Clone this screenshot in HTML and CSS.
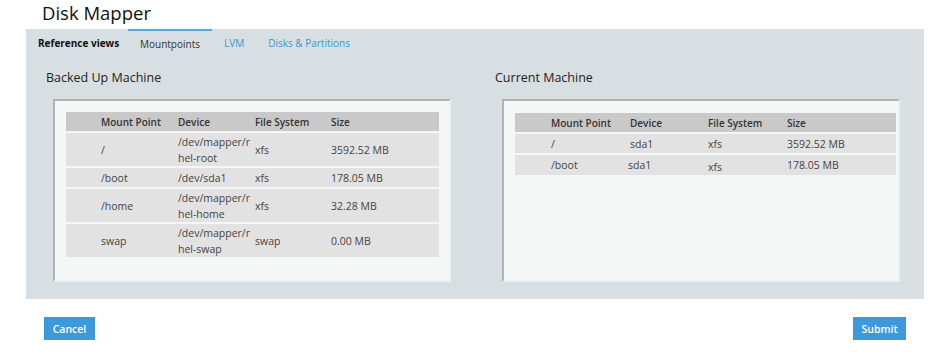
FILE: index.html
```html
<!DOCTYPE html>
<html lang="en">
<head>
    <meta charset="UTF-8">
    <title>Disk Mapper</title>
    <link rel="stylesheet" href="styles.css">
</head>
<body>
    <h1 class="page-title">Disk Mapper</h1>
    <div class="panel">
        <div class="tabs">
            <span class="tabs-label">Reference views</span>
            <a class="tab active">Mountpoints</a>
            <a class="tab">LVM</a>
            <a class="tab">Disks &amp; Partitions</a>
        </div>
        <div class="machines">
            <div class="machine">
                <h2 class="machine-title">Backed Up Machine</h2>
                <div class="machine-box">
                    <table class="mounts mounts-left">
                        <colgroup><col class="c1"><col class="c2"><col class="c3"><col class="c4"></colgroup>
                        <thead>
                            <tr><th>Mount Point</th><th>Device</th><th>File System</th><th>Size</th></tr>
                        </thead>
                        <tbody>
                            <tr class="tall"><td>/</td><td>/dev/mapper/r hel-root</td><td>xfs</td><td>3592.52 MB</td></tr>
                            <tr><td>/boot</td><td>/dev/sda1</td><td>xfs</td><td>178.05 MB</td></tr>
                            <tr class="tall"><td>/home</td><td>/dev/mapper/r hel-home</td><td>xfs</td><td>32.28 MB</td></tr>
                            <tr class="tall"><td>swap</td><td>/dev/mapper/r hel-swap</td><td>swap</td><td>0.00 MB</td></tr>
                        </tbody>
                    </table>
                </div>
            </div>
            <div class="machine">
                <h2 class="machine-title">Current Machine</h2>
                <div class="machine-box machine-box-right">
                    <table class="mounts mounts-right">
                        <colgroup><col class="c1"><col class="c2"><col class="c3"><col class="c4"></colgroup>
                        <thead>
                            <tr><th>Mount Point</th><th>Device</th><th>File System</th><th>Size</th></tr>
                        </thead>
                        <tbody>
                            <tr><td>/</td><td>sda1</td><td>xfs</td><td>3592.52 MB</td></tr>
                            <tr><td>/boot</td><td><span class="shift-left">sda1</span></td><td><span class="shift-down">xfs</span></td><td>178.05 MB</td></tr>
                        </tbody>
                    </table>
                </div>
            </div>
        </div>
    </div>
    <div class="actions">
        <button class="btn">Cancel</button>
        <button class="btn">Submit</button>
    </div>
</body>
</html>
```

FILE: styles.css
```css
body {
    margin: 0;
    font-family: "Open Sans", "Noto Sans", sans-serif;
    color: #333;
    background: #fff;
}

.page-title {
    margin: 0;
    padding-left: 42px;
    height: 29px;
    font-size: 18.5px;
    font-weight: normal;
    line-height: 25px;
    color: #111;
}

.panel {
    margin-left: 26px;
    width: 898px;
    height: 270px;
    background-color: #d7dfe2;
}

.tabs {
    display: flex;
    align-items: flex-start;
    height: 28px;
    padding-left: 12px;
    font-size: 10px;
    line-height: 14px;
}

.tabs-label {
    font-weight: bold;
    color: #111;
    padding-top: 7px;
    width: 78px;
    white-space: nowrap;
    margin-right: 12px;
}

.tab {
    color: #3b96d6;
    padding: 6px 12px 0;
    border-top: 1px solid transparent;
    cursor: pointer;
}

.tab.active {
    color: #333;
    border-top: 2px solid #5aa8e0;
    padding-top: 6px;
}

.machines {
    display: grid;
    grid-template-columns: 429px 429px;
    column-gap: 20px;
    padding-left: 20px;
}

.machine-title {
    margin: 12px 0 0;
    height: 30px;
    font-size: 12.5px;
    font-weight: normal;
    line-height: 18px;
    color: #222;
}

.machine-box {
    margin-left: 7px;
    width: 398px;
    height: 183px;
    box-sizing: border-box;
    background-color: #f5f7f7;
    border-top: 2px solid #aeb4b6;
    border-left: 2px solid #aeb4b6;
    border-right: 2px solid #eef1f2;
    border-bottom: 2px solid #eef1f2;
    padding-top: 11px;
    padding-left: 11px;
}

.machine-box-right {
    padding-top: 12px;
}

.mounts {
    table-layout: fixed;
    border-collapse: separate;
    border-spacing: 0 2px;
    margin-top: -2px;
    font-size: 10.5px;
}

.mounts-left {
    width: 373px;
}

.mounts-right {
    width: 381px;
}

.mounts-left .c1 { width: 112px; }
.mounts-left .c2 { width: 77px; }
.mounts-left .c3 { width: 76px; }
.mounts-left .c4 { width: 108px; }

.mounts-right .c1 { width: 115px; }
.mounts-right .c2 { width: 78px; }
.mounts-right .c3 { width: 79px; }
.mounts-right .c4 { width: 109px; }

.mounts th {
    background-color: #c9c9c9;
    text-align: left;
    font-size: 10px;
    font-weight: 600;
    height: 19px;
    padding: 0;
    color: #333;
}

.mounts td {
    background-color: #e2e2e2;
    height: 19px;
    padding: 0;
    line-height: 16px;
    color: #444;
}

.mounts tr.tall td {
    height: 33px;
}

.mounts th:first-child,
.mounts td:first-child {
    padding-left: 35px;
}

.mounts-right th:first-child,
.mounts-right td:first-child {
    padding-left: 36px;
}

.shift-left {
    display: inline-block;
    margin-left: -2px;
}

.shift-down {
    display: inline-block;
    padding-top: 4px;
}

.actions {
    display: flex;
    justify-content: space-between;
    padding: 18px 23px 0 44px;
}

.btn {
    width: 51px;
    height: 23px;
    border: none;
    background-color: #3c99dc;
    color: #fff;
    font-family: "Open Sans", sans-serif;
    font-size: 10.5px;
    font-weight: 600;
    padding: 0;
    cursor: pointer;
}

.btn:last-child {
    width: 53px;
}
```
